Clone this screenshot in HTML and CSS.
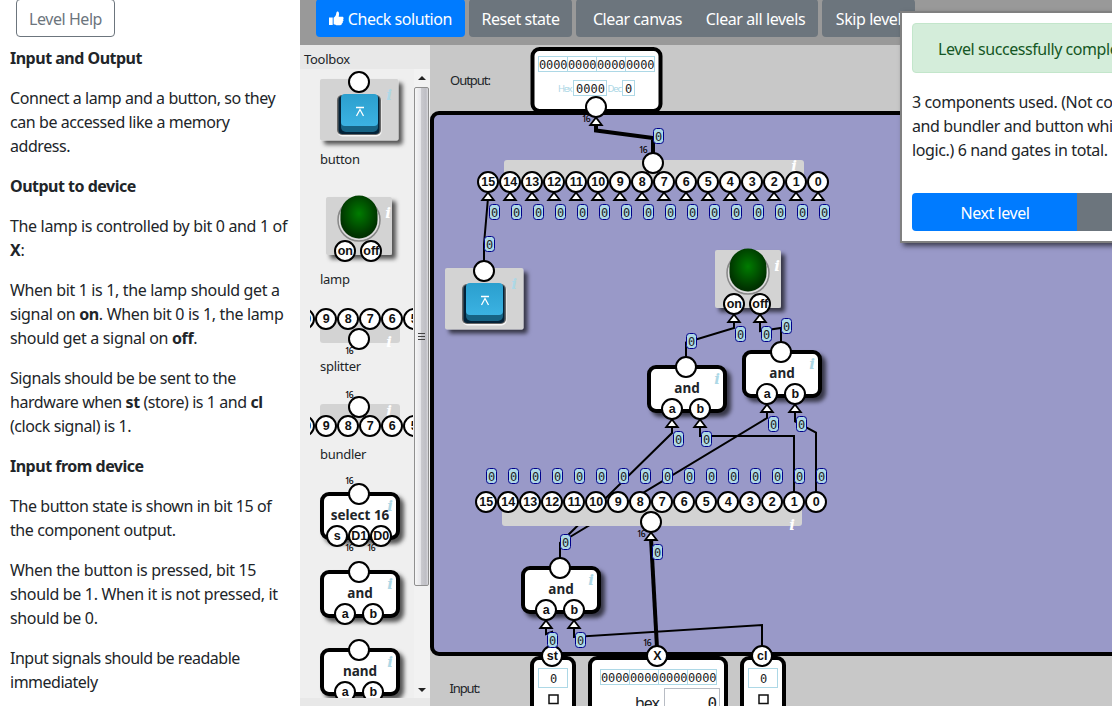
FILE: index.html
```html
<!DOCTYPE html>
<html lang="en">
<head>
<meta charset="utf-8">
<title>Input and Output</title>
<link rel="stylesheet" href="styles.css">
</head>
<body>
<div class="app">
  <aside class="help">
    <button class="btn btn-outline">Level Help</button>
    <div class="help-text">
      <h4>Input and Output</h4>
      <p>Connect a lamp and a button, so they<br>can be accessed like a memory<br>address.</p>
      <h4>Output to device</h4>
      <p class="loose">The lamp is controlled by bit 0 and 1 of<br><b>X</b>:</p>
      <p class="loose">When bit 1 is 1, the lamp should get a<br>signal on <b>on</b>. When bit 0 is 1, the lamp<br>should get a signal on <b>off</b>.</p>
      <p>Signals should be be sent to the<br>hardware when <b>st</b> (store) is 1 and <b>cl</b><br>(clock signal) is 1.</p>
      <h4>Input from device</h4>
      <p>The button state is shown in bit 15 of<br>the component output.</p>
      <p class="loose">When the button is pressed, bit 15<br>should be 1. When it is not pressed, it<br>should be 0.</p>
      <p class="tight">Input signals should be readable<br>immediately</p>
    </div>
  </aside>
  <main class="main">
    <nav class="toolbar">
      <button class="btn btn-primary check"><svg class="thumb-icon" viewBox="0 0 16 16"><path d="M0 7h4v8H0zM5 7.2C7 6 7.6 4.300 7.900 2.300 8.100.7 8.800.3 9.500.5c1.300.4 1.700 2.200 1 5.500h3.700c1.800 0 2.100 2 1 2.800.9.800.6 2-.4 2.400.5 1 .1 1.900-.9 2.200.2 1.200-.5 1.900-1.800 1.900H9.300C7.500 15.300 6.500 14.500 5 14.200z"/></svg>Check solution</button>
      <button class="btn btn-secondary reset">Reset state</button>
      <div class="group"><button class="btn btn-secondary">Clear canvas</button><button class="btn btn-secondary">Clear all levels</button></div>
      <button class="btn btn-secondary skip">Skip level</button>
    </nav>
    <div class="workspace">
      <section class="toolbox">
        <div class="toolbox-title">Toolbox</div>
        <div class="toolbox-body">
          <div class="tools" id="tools"></div>
          <div class="scrollbar">
            <span class="arrow up"></span>
            <div class="thumb"><i></i><i></i><i></i></div>
            <span class="arrow down"></span>
          </div>
        </div>
      </section>
      <svg class="diagram" id="diagram" viewBox="430 45 682 661" width="682" height="661"></svg>
    </div>
  </main>
  <div class="dialog">
    <div class="alert">Level successfully completed!</div>
    <p>3 components used. (Not counting splitter<br>and bundler and button which have no<br>logic.) 6 nand gates in total.</p>
    <div class="actions"><button class="btn btn-primary">Next level</button><button class="btn btn-secondary"></button></div>
  </div>
</div>
<svg width="0" height="0" class="defs">
  <defs>
    <filter id="shadow" x="-20%" y="-20%" width="150%" height="150%"><feDropShadow dx="4" dy="4" stdDeviation="2" flood-color="#000" flood-opacity=".65"/></filter>
    <radialGradient id="green" cx=".5" cy=".42" r=".6"><stop offset="0" stop-color="#007c00"/><stop offset=".85" stop-color="#003400"/><stop offset="1" stop-color="#002c00"/></radialGradient>
    <linearGradient id="blue" x2="0" y2="1"><stop offset="0" stop-color="#2b9fce"/><stop offset="1" stop-color="#3bb2e2"/></linearGradient>
  </defs>
</svg>
<script src="app.js"></script>
</body>
</html>
```
FILE: styles.css
```css
* { box-sizing: border-box; }
body { margin: 0; overflow: hidden; background: #fff; color: #212529; font: 16px/24px "Noto Sans", "Open Sans", sans-serif; letter-spacing: -0.43px; }
.app { position: relative; display: flex; width: 1112px; height: 706px; overflow: hidden; }
.defs { position: absolute; }

.btn { height: 38px; margin: 0; padding: 2px 12px 0; border: 1px solid transparent; border-radius: 4px; font: inherit; letter-spacing: inherit; color: #fff; white-space: nowrap; }
.btn-primary { background: #007bff; }
.btn-secondary { background: #6c757d; }
.btn-outline { width: 99px; margin-left: 16px; padding: 2px 0 0; background: #fff; border-color: #6c757d; color: #6c757d; }

.help { width: 300px; flex: none; margin-top: -1px; }
.help-text { padding: 9px 0 0 10px; white-space: nowrap; }
.help-text h4, .help-text p { margin: 0 0 16px; font-size: 16px; }
.help-text h4 { letter-spacing: -0.5px; }
.loose { letter-spacing: -0.34px; }
.tight { letter-spacing: -0.5px; }

.main { flex: 1; min-width: 0; display: flex; flex-direction: column; }
.toolbar { display: flex; gap: 4px; height: 45px; flex: none; padding-left: 16px; background: #999; }
.toolbar .btn { margin-top: -1px; }
.check { width: 149px; display: flex; align-items: center; justify-content: center; gap: 4px; }
.thumb-icon { width: 16px; height: 15px; margin-top: -2px; fill: #fff; }
.reset { width: 103px; padding: 2px 0 0; }
.group { display: flex; width: 242px; }
.group .btn { padding: 2px 0 0; }
.group .btn:first-child { width: 117px; padding-left: 6px; border-radius: 4px 0 0 4px; }
.group .btn:last-child { width: 125px; border-radius: 0 4px 4px 0; }
.skip { width: 93px; padding: 2px 0 0; }

.workspace { display: flex; flex: 1; min-height: 0; }
.toolbox { width: 130px; flex: none; background: #e8e8e8; font-size: 13px; letter-spacing: -0.28px; }
.toolbox-title { height: 24px; padding: 2px 4px; letter-spacing: -0.3px; }
.toolbox-body { display: flex; height: 629px; background: #efefef; }
.tools { width: 103px; margin: 0 1px 0 10px; overflow: hidden; }
.tools svg { display: block; overflow: visible; }
.tool-label { height: 24px; padding-left: 10px; line-height: 24px; }
.scrollbar { width: 16px; display: flex; flex-direction: column; align-items: flex-start; background: #f2f2f2; }
.arrow { width: 0; height: 0; margin-left: 4px; border: 4px solid transparent; }
.up { margin-top: 3px; margin-bottom: 7px; border-bottom-color: #222; }
.down { margin-top: 102px; border-top-color: #222; }
.thumb { width: 15px; height: 499px; border: 1px solid #8f8f8f; border-radius: 2px; background: linear-gradient(90deg, #f6f6f6, #e4e4e8 45%, #c9c9ce 50%, #bebec4 85%, #dcdce0); display: flex; flex-direction: column; align-items: center; justify-content: center; gap: 2px; }
.thumb i { width: 7px; height: 1px; background: #444; }

.diagram { display: block; background: #c8c8c8; }
.diagram text, .tools text { letter-spacing: 0; }
.mono { font-family: "DejaVu Sans Mono", monospace; font-size: 12px; fill: #222; }
.badge { font-size: 12px; text-anchor: middle; }
.pin { font: bold 12.5px "Liberation Sans", Arial, sans-serif; fill: #111; text-anchor: middle; }
.name { font: bold 13.5px "Noto Sans", sans-serif; fill: #212529; text-anchor: middle; }
.info { font: italic bold 15px "DejaVu Serif", serif; text-anchor: middle; }
.width { font: 500 8.5px "Noto Sans", sans-serif; fill: #000; }
.caption { font: 13px "Noto Sans", sans-serif; fill: #212529; }
.small { font: 9.5px "Noto Sans", sans-serif; fill: #add8e6; }

.dialog { position: absolute; left: 900px; top: 11px; width: 402px; height: 232px; padding: 10px; background: #fff; border: 2px solid #808080; box-shadow: 3px 3px 5px rgba(0,0,0,.6); white-space: nowrap; }
.alert { height: 50px; padding: 13px 25px; background: #d4edda; border: 1px solid #c3e6cb; border-radius: 4px; color: #155724; line-height: 24px; }
.dialog p { margin: 17px 0 31px; letter-spacing: -0.38px; }
.actions { display: flex; }
.actions .btn { width: 165px; }
.actions .btn:first-child { padding-left: 13px; border-radius: 4px 0 0 4px; }
.actions .btn:last-child { border-radius: 0 4px 4px 0; }
```
FILE: app.js
```js
// Component drawing helpers; each returns SVG markup.
const pin = (x, y, label = '') =>
  `<circle cx="${x}" cy="${y}" r="10" fill="#fff" stroke="#000" stroke-width="2"/>` +
  (label !== '' ? `<text class="pin" x="${x + .3}" y="${y + 4.3}">${label}</text>` : '');
const arrow = (x, y) =>
  `<path d="M${x} ${y + 10.5}l-5.800 7.500h11.600z" fill="#fff" stroke="#000" stroke-width="1.800"/>`;
const badge = (x, y) =>
  `<rect x="${x - 5}" y="${y - 7.5}" width="10" height="15" rx="3" fill="#add8e6" stroke="#00008b"/>` +
  `<text class="mono badge" x="${x}" y="${y + 4.5}">0</text>`;
const info = (x, y, color = '#add8e6') => `<text class="info" x="${x}" y="${y}" fill="${color}">i</text>`;
const width16 = (x, y) => `<text class="width" x="${x}" y="${y}" textLength="8.500">16</text>`;
const wire = (d, w = 2) => `<path d="${d}" fill="none" stroke="#000" stroke-width="${w}"/>`;

const gate = (x, y, name, inputs) =>
  `<rect x="${x + 2}" y="${y + 2}" width="76" height="44" rx="7" fill="#fff" stroke="#000" stroke-width="4" filter="url(#shadow)"/>` +
  `<text class="name" x="${x + 40}" y="${y + 27.5}">${name}</text>` + info(x + 70, y + 19) +
  pin(x + 39, y + 2) + inputs.map(([dx, l]) => pin(x + dx, y + 44, l)).join('');
const AB = [[25, 'a'], [53, 'b']];

const button = (x, y) =>
  `<rect x="${x}" y="${y}" width="78.500" height="61.500" rx="2" fill="#d3d3d3" filter="url(#shadow)"/>
  <rect x="${x + 17.5}" y="${y + 17}" width="44" height="40.500" rx="5" fill="#f8f8f8"/>
  <rect x="${x + 17}" y="${y + 16}" width="44" height="40" rx="5" fill="#666"/>
  <rect x="${x + 18.5}" y="${y + 17}" width="41" height="38" rx="4" fill="#032238"/>
  <rect x="${x + 21}" y="${y + 20}" width="37" height="33" rx="5" fill="#176384"/>
  <rect x="${x + 21}" y="${y + 15}" width="37" height="32" rx="4" fill="url(#blue)"/>
  <path d="M${x + 36} ${y + 28.5}h8M${x + 36.5} ${y + 37}l3.500-6.500 3.500 6.500" fill="none" stroke="#fff" stroke-width="1.300"/>` +
  info(x + 69, y + 21) + pin(x + 39, y + 3);
const lamp = (x, y) =>
  `<rect x="${x}" y="${y}" width="66" height="58" rx="2" fill="#d3d3d3" filter="url(#shadow)"/>
  <circle cx="${x + 33}" cy="${y + 23}" r="21" fill="#ccc" stroke="#888" stroke-width="1.500"/>
  <circle cx="${x + 33}" cy="${y + 23}" r="19.500" fill="none" stroke="#e4e4e4"/>
  <path d="M${x + 14.5} ${y + 17}a18.500 18.500 0 0 1 37 0v6a18.500 18.500 0 0 1-37 0z" fill="url(#green)"/>` +
  info(x + 62, y + 21, '#fff') + pin(x + 19, y + 54, 'on') + pin(x + 45, y + 54, 'off');
const plate = (x, y, w, h) => `<rect x="${x}" y="${y}" width="${w}" height="${h}" rx="3" fill="#d3d3d3"/>`;
const bus = (x, y, from, to) => {
  let s = '';
  for (let n = from, i = 0; n >= to; n--, i++) s += pin(x + 22 * i, y, n);
  return s;
};

// Sixteen bits in four nibble cells
const binary = (x, y) => {
  let s = '';
  for (let i = 0; i < 4; i++) {
    s += `<rect x="${x + 29 * i}" y="${y}" width="29" height="15" fill="#fff" stroke="#add8e6"/>` +
      `<text class="mono" x="${x + 29 * i + .5}" y="${y + 12}" textLength="28.500">0000</text>`;
  }
  return s;
};
const field = (x, y, w, h, t, tx) =>
  `<rect x="${x}" y="${y}" width="${w}" height="${h}" fill="#fff" stroke="#add8e6"/><text class="mono" x="${tx}" y="${y + h / 2 + 4.5}">${t}</text>`;
const terminal = (x, y, w, h) =>
  `<rect x="${x + 2}" y="${y + 2}" width="${w - 4}" height="${h - 4}" rx="7" fill="#fff" stroke="#000" stroke-width="4"/>`;
const bitInput = (x, label) => terminal(x, 656, 46, 80) + field(x + 8.5, 668.5, 29, 19, '0', x + 20) +
  `<rect x="${x + 19}" y="695" width="9" height="8.500" fill="#fff" stroke="#111" stroke-width="1.500"/>` + pin(x + 22, 656, label);

// Toolbox: top, height, label, drawing
const tools = [
  [69, 78, 'button', button(320, 79)],
  [171, 96, 'lamp', lamp(326, 197)],
  [291, 63, 'splitter', plate(320, 319, 80, 24) + info(389, 347, '#fff') + bus(304, 319, 10, 5) + pin(359, 339) + width16(345, 354)],
  [378, 64, 'bundler', plate(320, 404, 80, 22) + info(389, 416, '#fff') + bus(304, 426, 10, 5) + pin(359, 407) + width16(345, 398)],
  [466, 94, '', gate(320, 492, 'select 16', [[17, 's'], [39, 'D1'], [61, 'D0']]) + width16(345, 484) + width16(345, 551) + width16(367, 551)],
  [560, 78, '', gate(320, 570, 'and', AB)],
  [638, 60, '', gate(320, 648, 'nand', AB)],
];
document.getElementById('tools').innerHTML = tools.map(([y, h, label, art]) =>
  `<svg width="103" height="${h}" viewBox="310 ${y} 103 ${h}">${art}</svg>` + (label ? `<div class="tool-label">${label}</div>` : '')).join('');

let d = `<rect x="432" y="113" width="720" height="541" rx="7" fill="#9999c8" stroke="#000" stroke-width="4"/>`;
d += `<text class="caption" x="450" y="85" textLength="41">Output:</text><text class="caption" x="449.500" y="692.500" textLength="31">Input:</text>`;

// Output terminal
d += terminal(530.5, 47, 132, 66) + binary(538.5, 56.5) +
  `<text class="small" x="558" y="92" textLength="14.500">Hex</text><text class="small" x="607.500" y="92" textLength="14.500">Dec</text>` +
  field(573.5, 80.5, 33, 15, '0000', 576) + field(622.5, 80.5, 12, 15, '0', 625);

// Wires
d += wire('M596 122V130.500L653 138V153', 4) + wire('M488 198L484 244V262') +
  wire('M734 322V328L686 342.500V358') + wire('M760 322V331L781 328V342') +
  wire('M672 427V433L560 543V558') + wire('M767 412V418L560 543') +
  wire('M700 427V436H794V492') + wire('M795 412V421.500L816 432.500V492') +
  wire('M651 538L657 648', 4) + wire('M546 628V634L552 632V646') + wire('M574 628V637L762 625V646');

// Bundler and splitter
d += plate(504, 160, 300, 22) + info(794, 171, '#fff') + bus(488, 182, 15, 0) + pin(653, 163);
d += plate(502, 502, 300, 24) + info(792, 530, '#fff') + bus(486, 502, 15, 0) + pin(651, 522);
for (let i = 0; i < 16; i++) d += arrow(488 + 22 * i, 182) + badge(494.5 + 22 * i, 212) + badge(491.5 + 22 * i, 476);

d += button(445, 268) + lamp(715, 250) + gate(647, 365, 'and', AB) + gate(742, 350, 'and', AB) + gate(521, 566, 'and', AB);

// Input terminals
d += bitInput(530, 'st') + bitInput(740, 'cl');
d += terminal(588, 656, 140, 80) + binary(600.5, 669.5) +
  `<text class="caption hex" x="635" y="709" style="font-size:16px" textLength="25">hex</text>
  <rect x="664.500" y="688.500" width="55" height="30" fill="#fff" stroke="#b8bcc4"/>
  <text class="mono" x="707.500" y="709" style="font-size:16px">0</text>` + pin(657, 656, 'X') + pin(596, 107);

d += [[596, 107], [734, 304], [760, 304], [672, 409], [700, 409], [767, 394], [795, 394], [651, 522], [546, 610], [574, 610]].map(p => arrow(...p)).join('');
d += [[658.5, 136], [489.5, 244], [691.5, 341], [740.5, 334], [786.5, 326], [766.5, 334], [678.5, 439], [706.5, 439],
  [773.5, 424], [801.5, 424], [565.5, 542], [657.5, 552], [552.5, 640], [580.5, 640]].map(p => badge(...p)).join('');
d += width16(582, 122) + width16(639, 153) + width16(637, 537) + width16(643, 646);
document.getElementById('diagram').innerHTML = d;
```
